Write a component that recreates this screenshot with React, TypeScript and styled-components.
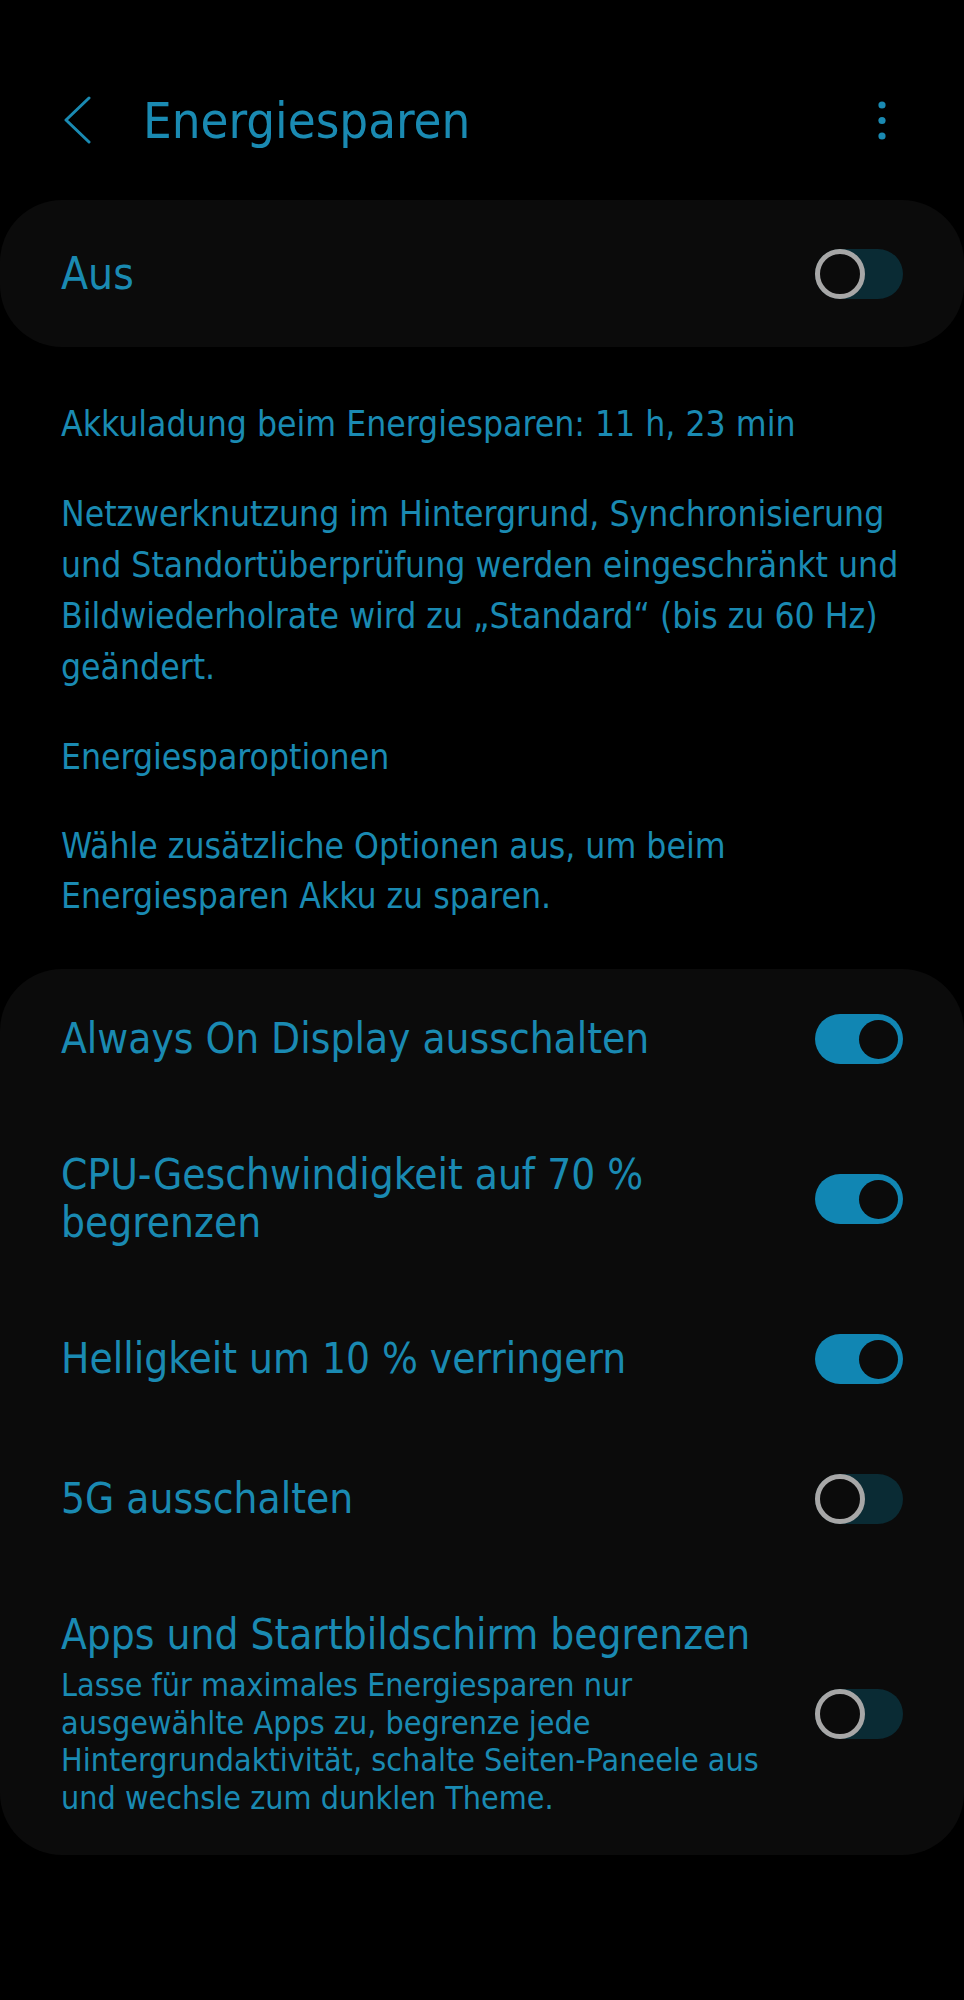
import styled, { createGlobalStyle } from 'styled-components';

const BLUE = '#1a8ab2';

const GlobalStyle = createGlobalStyle`
    html, body {
        margin: 0;
        padding: 0;
        background: #000;
    }
    body {
        font-family: 'DejaVu Sans Condensed', 'DejaVu Sans', sans-serif;
        font-stretch: condensed;
        color: ${BLUE};
    }
`;

const Screen = styled.div`
    width: 964px;
    min-height: 2000px;
    background: #000;
    display: flex;
    flex-direction: column;
`;

const Header = styled.header`
    display: flex;
    align-items: flex-start;
    height: 120px;
    margin: 60px 0 20px;
    padding: 0 0 0 62px;
    box-sizing: border-box;
`;

const BackButton = styled.div`
    width: 30px;
    height: 48px;
    margin-top: 36px;
    display: flex;
    align-items: center;
`;

const Title = styled.h1`
    margin: 26px 0 0 51px;
    flex: 1;
    font-size: 50.5px;
    line-height: 70px;
    font-weight: normal;
    color: ${BLUE};
`;

const MoreButton = styled.div`
    width: 10px;
    height: 42px;
    margin: 40px 77px 0 0;
    display: flex;
    justify-content: center;
`;

const Card = styled.section`
    background: #0b0b0b;
    border-radius: 62px;
    display: flex;
    flex-direction: column;
`;

const MasterRow = styled.div`
    display: flex;
    align-items: center;
    justify-content: space-between;
    height: 147px;
    padding: 0 61px;
    box-sizing: border-box;
    font-size: 44px;
`;

const InfoBlock = styled.div`
    display: flex;
    flex-direction: column;
    gap: 39px;
    padding: 51px 20px 48px 61px;
`;

const Paragraph = styled.p<{ $lh?: number }>`
    margin: 0;
    font-size: 35.2px;
    line-height: ${({ $lh }) => $lh ?? 51}px;
`;

const Row = styled.div`
    display: flex;
    align-items: center;
    min-height: 140px;
    padding: 42px 61px;
    box-sizing: border-box;
    gap: 20px;

    &:last-child {
        padding-bottom: 38px;
    }
`;

const RowText = styled.div`
    flex: 1;
    display: flex;
    flex-direction: column;
    gap: 8px;
`;

const RowTitle = styled.div`
    font-size: 42px;
    line-height: 48px;
`;

const RowSub = styled.div`
    font-size: 32px;
    line-height: 37.5px;
`;

const Track = styled.div<{ $on: boolean }>`
    flex: none;
    position: relative;
    width: 88px;
    height: 50px;
    border-radius: 25px;
    background: ${({ $on }) => ($on ? '#1186b3' : '#0a2b34')};
`;

const Thumb = styled.div<{ $on: boolean }>`
    position: absolute;
    top: ${({ $on }) => ($on ? '5.5px' : '0')};
    left: ${({ $on }) => ($on ? '43.5px' : '0')};
    width: ${({ $on }) => ($on ? '39px' : '50px')};
    height: ${({ $on }) => ($on ? '39px' : '50px')};
    box-sizing: border-box;
    border-radius: 50%;
    background: #0b0b0b;
    border: ${({ $on }) => ($on ? 'none' : '5px solid #a7a7a7')};
`;

const Toggle = ({ on }: { on: boolean }) => (
    <Track $on={on}>
        <Thumb $on={on} />
    </Track>
);

const Lines = ({ lines }: { lines: string[] }) => (
    <>
        {lines.map((line, i) => (
            <span key={i}>
                {line}
                {i < lines.length - 1 && <br />}
            </span>
        ))}
    </>
);

const options = [
    { title: ['Always On Display ausschalten'], on: true },
    { title: ['CPU-Geschwindigkeit auf 70 %', 'begrenzen'], on: true },
    { title: ['Helligkeit um 10 % verringern'], on: true },
    { title: ['5G ausschalten'], on: false },
    {
        title: ['Apps und Startbildschirm begrenzen'],
        sub: [
            'Lasse für maximales Energiesparen nur',
            'ausgewählte Apps zu, begrenze jede',
            'Hintergrundaktivität, schalte Seiten-Paneele aus',
            'und wechsle zum dunklen Theme.',
        ],
        on: false,
    },
];

export default function App() {
    return (
        <Screen>
            <GlobalStyle />
            <Header>
                <BackButton>
                    <svg width="30" height="48" viewBox="0 0 30 48">
                        <polyline
                            points="27,2 4,24 27,46"
                            fill="none"
                            stroke={BLUE}
                            strokeWidth="3"
                            strokeLinecap="round"
                            strokeLinejoin="round"
                        />
                    </svg>
                </BackButton>
                <Title>Energiesparen</Title>
                <MoreButton>
                    <svg width="10" height="42" viewBox="0 0 10 42">
                        <circle cx="5" cy="5" r="3.6" fill={BLUE} />
                        <circle cx="5" cy="20.5" r="3.6" fill={BLUE} />
                        <circle cx="5" cy="36" r="3.6" fill={BLUE} />
                    </svg>
                </MoreButton>
            </Header>

            <Card>
                <MasterRow>
                    <span>Aus</span>
                    <Toggle on={false} />
                </MasterRow>
            </Card>

            <InfoBlock>
                <Paragraph>Akkuladung beim Energiesparen: 11 h, 23 min</Paragraph>
                <Paragraph>
                    <Lines
                        lines={[
                            'Netzwerknutzung im Hintergrund, Synchronisierung',
                            'und Standortüberprüfung werden eingeschränkt und',
                            'Bildwiederholrate wird zu „Standard“ (bis zu 60 Hz)',
                            'geändert.',
                        ]}
                    />
                </Paragraph>
                <Paragraph>Energiesparoptionen</Paragraph>
                <Paragraph $lh={50}>
                    <Lines
                        lines={[
                            'Wähle zusätzliche Optionen aus, um beim',
                            'Energiesparen Akku zu sparen.',
                        ]}
                    />
                </Paragraph>
            </InfoBlock>

            <Card>
                {options.map(opt => (
                    <Row key={opt.title.join(' ')}>
                        <RowText>
                            <RowTitle>
                                <Lines lines={opt.title} />
                            </RowTitle>
                            {opt.sub && (
                                <RowSub>
                                    <Lines lines={opt.sub} />
                                </RowSub>
                            )}
                        </RowText>
                        <Toggle on={opt.on} />
                    </Row>
                ))}
            </Card>
        </Screen>
    );
}
